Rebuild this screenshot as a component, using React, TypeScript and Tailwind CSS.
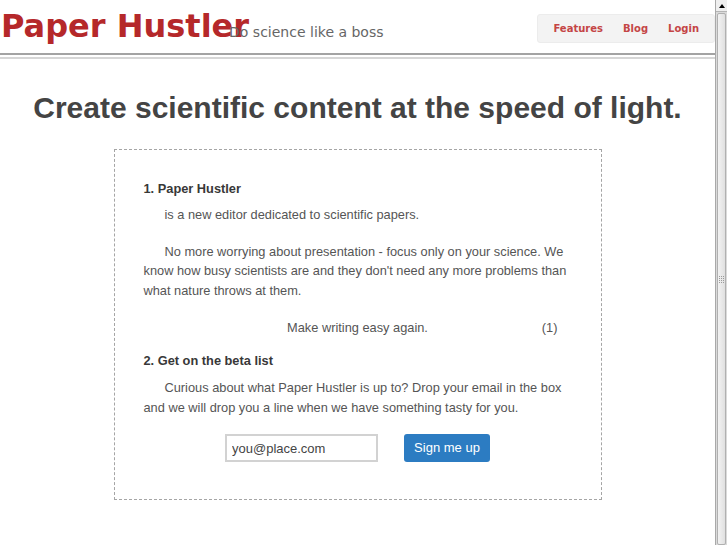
import React from 'react';

const sans = { fontFamily: '"Liberation Sans", Arial, sans-serif' };

function Scrollbar() {
  return (
    <div className="w-[12px] h-full flex flex-col bg-[#dadada] border-l border-[#a9a9a9]">
      <div className="h-[12px] flex items-center justify-center bg-[#efefef] border-b border-[#b5b5b5]">
        <div className="w-0 h-0 border-l-[3px] border-r-[3px] border-b-[4px] border-l-transparent border-r-transparent border-b-black" />
      </div>
      <div className="flex-1 mx-[1px] mt-[1px] flex items-center justify-center rounded-[2px] border border-[#b0b0b0] bg-gradient-to-r from-[#f2f2f2] to-[#e0e0e0]">
        <div className="grid grid-cols-3 gap-[1px]">
          {Array.from({ length: 12 }).map((_, i) => (
            <div key={i} className="w-[1px] h-[1px] bg-[#9a9a9a]" />
          ))}
        </div>
      </div>
    </div>
  );
}

export default function App() {
  return (
    <div className="w-[727px] h-[545px] flex bg-white overflow-hidden">
      <div className="flex-1 flex flex-col">
        {/* header */}
        <div className="h-[53px] flex items-start justify-between">
          <div className="flex items-baseline pt-[8px] pl-[1px]" style={{ fontFamily: '"DejaVu Sans", sans-serif' }}>
            <span className="text-[32px] font-bold text-[#b5282a] leading-[1.164]">Paper Hustler</span>
            <span className="relative ml-[-20px] text-[14px] text-[#666]">Do science like a boss</span>
          </div>
          <nav
            className="mt-[14px] h-[29px] px-[5px] flex items-center bg-[#f3f3f3] border border-[#ececec] rounded-[3px]"
            style={{ fontFamily: '"DejaVu Sans", sans-serif' }}
          >
            <a className="px-[10px] text-[10px] font-bold text-[#c44545]">Features</a>
            <a className="px-[10px] text-[10px] font-bold text-[#c44545]">Blog</a>
            <a className="px-[10px] text-[10px] font-bold text-[#c44545]">Login</a>
          </nav>
        </div>
        <div className="h-[2px] bg-[#a3a3a3]" />
        <div className="h-[2px]" />
        <div className="h-[2px] bg-[#d6d6d6]" />

        {/* hero */}
        <h1 className="mt-[32px] text-center text-[30px] font-bold text-[#444] leading-[1.15]" style={sans}>
          Create scientific content at the speed of light.
        </h1>

        <div
          className="mt-[23px] mx-auto w-[488px] border border-dashed border-[#a5a5a5] px-[29px] pt-[29px] pb-[37px] text-[12.8px] leading-[19.5px] text-[#555]"
          style={sans}
        >
          <h2 className="font-bold text-[#383838] mb-[7px]">1. Paper Hustler</h2>
          <p className="indent-[21px] mb-[17px]">is a new editor dedicated to scientific papers.</p>
          <p className="indent-[21px] mb-[18px]">
            No more worrying about presentation - focus only on your science. We know how busy scientists are and
            they don't need any more problems than what nature throws at them.
          </p>
          <div className="grid grid-cols-[1fr_auto_1fr] mb-[13px]">
            <span />
            <span>Make writing easy again.</span>
            <span className="text-right pr-[14px]">(1)</span>
          </div>
          <h2 className="font-bold text-[#383838] mb-[8px]">2. Get on the beta list</h2>
          <p className="indent-[21px] mb-[17px]">
            Curious about what Paper Hustler is up to? Drop your email in the box and we will drop you a line when we
            have something tasty for you.
          </p>
          <div className="flex justify-center gap-[26px]">
            <input
              defaultValue="you@place.com"
              className="w-[153px] h-[28px] border-2 border-[#d2d2d2] px-[5px] text-[13px] text-[#444] outline-none"
              style={sans}
            />
            <button
              className="w-[86px] h-[28px] rounded-[3px] bg-[#2c7cc2] text-white text-[13px]"
              style={sans}
            >
              Sign me up
            </button>
          </div>
        </div>
      </div>
      <Scrollbar />
    </div>
  );
}
